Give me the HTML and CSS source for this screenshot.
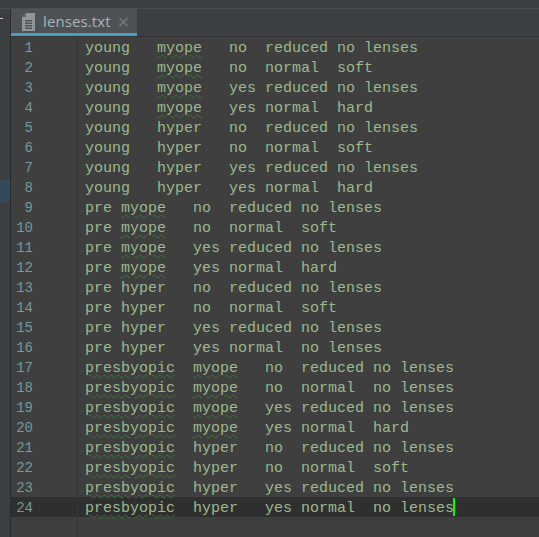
FILE: index.html
```html
<!DOCTYPE html>
<html>
<head>
<meta charset="utf-8">
<link rel="stylesheet" href="styles.css">
</head>
<body>
<div class="topstrip"></div>
<div class="frame">
  <div class="side">
    <div class="side-top"><span class="dash"></span></div>
    <div class="side-sel"></div>
  </div>
  <div class="main">
    <div class="tabbar">
      <div class="tab">
        <svg class="ficon" width="13" height="18" viewBox="0 0 13 18">
          <path d="M4 0 H13 V18 H0 V4 Z" fill="#8e969c"/>
          <path d="M0 4 H4 V0 Z" fill="#5f666b"/>
          <rect x="3" y="7" width="7" height="1.4" fill="#4b5155"/>
          <rect x="3" y="9.5" width="7" height="1.4" fill="#4b5155"/>
          <rect x="3" y="12" width="7" height="1.4" fill="#4b5155"/>
          <rect x="3" y="14.5" width="7" height="1.4" fill="#4b5155"/>
        </svg>
        <span class="tname">lenses.txt</span>
        <span class="tclose">×</span>
      </div>
    </div>
    <div class="editor" id="ed">
      <div class="row"><span class="ln">1</span><span class="code">young	<u>myope</u>	no	reduced	no lenses</span></div>
      <div class="row"><span class="ln">2</span><span class="code">young	<u>myope</u>	no	normal	soft</span></div>
      <div class="row"><span class="ln">3</span><span class="code">young	<u>myope</u>	yes	reduced	no lenses</span></div>
      <div class="row"><span class="ln">4</span><span class="code">young	<u>myope</u>	yes	normal	hard</span></div>
      <div class="row"><span class="ln">5</span><span class="code">young	hyper	no	reduced	no lenses</span></div>
      <div class="row"><span class="ln">6</span><span class="code">young	hyper	no	normal	soft</span></div>
      <div class="row"><span class="ln">7</span><span class="code">young	hyper	yes	reduced	no lenses</span></div>
      <div class="row"><span class="ln">8</span><span class="code">young	hyper	yes	normal	hard</span></div>
      <div class="row"><span class="ln">9</span><span class="code">pre <u>myope</u>	no	reduced	no lenses</span></div>
      <div class="row"><span class="ln">10</span><span class="code">pre <u>myope</u>	no	normal	soft</span></div>
      <div class="row"><span class="ln">11</span><span class="code">pre <u>myope</u>	yes	reduced	no lenses</span></div>
      <div class="row"><span class="ln">12</span><span class="code">pre <u>myope</u>	yes	normal	hard</span></div>
      <div class="row"><span class="ln">13</span><span class="code">pre hyper	no	reduced	no lenses</span></div>
      <div class="row"><span class="ln">14</span><span class="code">pre hyper	no	normal	soft</span></div>
      <div class="row"><span class="ln">15</span><span class="code">pre hyper	yes	reduced	no lenses</span></div>
      <div class="row"><span class="ln">16</span><span class="code">pre hyper	yes	normal	no lenses</span></div>
      <div class="row"><span class="ln">17</span><span class="code"><u>presbyopic</u>	<u>myope</u>	no	reduced	no lenses</span></div>
      <div class="row"><span class="ln">18</span><span class="code"><u>presbyopic</u>	<u>myope</u>	no	normal	no lenses</span></div>
      <div class="row"><span class="ln">19</span><span class="code"><u>presbyopic</u>	<u>myope</u>	yes	reduced	no lenses</span></div>
      <div class="row"><span class="ln">20</span><span class="code"><u>presbyopic</u>	<u>myope</u>	yes	normal	hard</span></div>
      <div class="row"><span class="ln">21</span><span class="code"><u>presbyopic</u>	hyper	no	reduced	no lenses</span></div>
      <div class="row"><span class="ln">22</span><span class="code"><u>presbyopic</u>	hyper	no	normal	soft</span></div>
      <div class="row"><span class="ln">23</span><span class="code"><u>presbyopic</u>	hyper	yes	reduced	no lenses</span></div>
      <div class="row current"><span class="ln">24</span><span class="code"><u>presbyopic</u>	hyper	yes	normal	no lenses<span class="caret"></span></span></div>
    </div>
  </div>
</div>
</body>
</html>
```
FILE: styles.css
```css
html, body {
  margin: 0;
  padding: 0;
  height: 100%;
  overflow: hidden;
}
body {
  background: #3f3f3f;
  font-family: "Liberation Mono", monospace;
}
.topstrip {
  height: 8px;
  background: #3c3f41;
  border-bottom: 1px solid #4b4e50;
}
.frame {
  display: flex;
  height: calc(100% - 9px);
}
.side {
  width: 10px;
  flex: none;
  background: #3c3f41;
  border-right: 1px solid #2b2b2b;
  display: flex;
  flex-direction: column;
}
.side-top {
  height: 28px;
  position: relative;
}
.dash {
  position: absolute;
  left: 0;
  top: 9px;
  width: 3px;
  height: 1px;
  background: #c8c8c8;
}
.side-sel {
  margin-top: 143px;
  height: 22px;
  background: #34495a;
}
.main {
  flex: 1;
  display: flex;
  flex-direction: column;
  min-width: 0;
}
.tabbar {
  height: 27px;
  background: #3c3f41;
  border-bottom: 1px solid #323232;
  display: flex;
}
.tab {
  height: 24px;
  background: #4e5254;
  border-bottom: 3px solid #4a9dbf;
  display: flex;
  align-items: center;
  padding-left: 11px;
  box-sizing: content-box;
  width: 115px;
}
.ficon {
  flex: none;
  margin-top: 2px;
}
.tname {
  margin-left: 8px;
  font-family: "Open Sans", "Noto Sans", sans-serif;
  font-size: 15px;
  color: #a9b2ba;
  letter-spacing: 0.1px;
}
.tclose {
  margin-left: 6px;
  font-family: "DejaVu Sans", sans-serif;
  font-size: 16px;
  color: #737a80;
}
.editor {
  flex: 1;
  background: #3f3f3f;
  background-image: linear-gradient(#363636, #363636);
  background-size: 1px 100%;
  background-position: 66px 0;
  background-repeat: no-repeat;
}
.row {
  display: flex;
  height: 20px;
  line-height: 20px;
}
.row.current {
  background: #2f2f2f;
}
.ln {
  width: 22px;
  text-align: right;
  font-size: 14px;
  color: #7499a0;
  flex: none;
  padding-top: 1px;
}
.code {
  margin-left: 44px;
  border-left: 1px solid #363636;
  padding-left: 7px;
  padding-top: 3px;
  white-space: pre;
  tab-size: 4;
  -moz-tab-size: 4;
  font-size: 15px;
  line-height: 17px;
  color: #9cb98c;
}
.code u {
  text-decoration: underline wavy #2a7f2a;
  text-decoration-thickness: 1px;
  text-underline-offset: 2px;
}
.caret {
  display: inline-block;
  width: 2px;
  height: 18px;
  margin-top: -2px;
  vertical-align: top;
  background: #00ff00;
  margin-left: -1px;
}
```
